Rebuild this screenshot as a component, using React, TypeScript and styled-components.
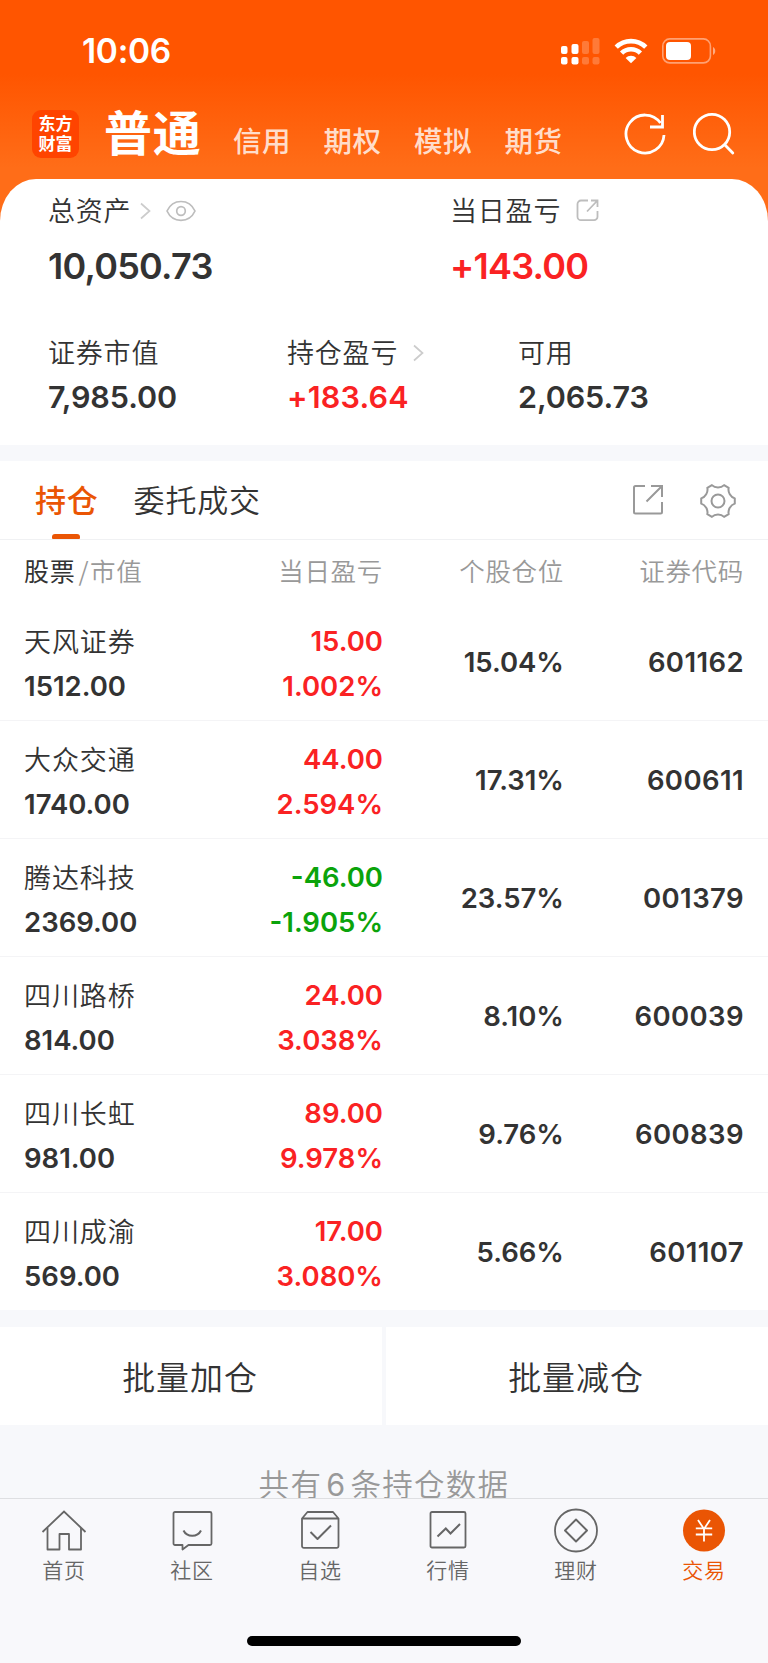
import React from "react";
import styled, { createGlobalStyle } from "styled-components";

const CJK = `"Noto Sans CJK SC", "Noto Sans", sans-serif`;
const NUM = `Inter, "Noto Sans CJK SC", sans-serif`;

const INK = "#333333";
const RED = "#fa2223";
const GREEN = "#0ba30b";
const ORANGE = "#ea5504";
const MUTED = "#999999";
const CANVAS = "#f7f8fb";

const GlobalStyle = createGlobalStyle`
  * { box-sizing: border-box; }
  body { margin: 0; background: ${CANVAS}; }
  svg { display: block; flex: none; }
`;

const Screen = styled.div`
  width: 768px;
  height: 1663px;
  overflow: hidden;
  display: flex;
  flex-direction: column;
  background: ${CANVAS};
  color: ${INK};
  font-family: ${CJK};
`;

const Hero = styled.header`
  height: 225px;
  flex: none;
  margin-bottom: -46px;
  background: linear-gradient(#ff5500 0, #ff5500 74px, #ff6d18 168px, #ff6d18 100%);
`;

const StatusBar = styled.div`
  height: 102px;
  display: flex;
  justify-content: space-between;
  padding: 0 52px 0 82px;
  color: #fff;
`;

const Clock = styled.time`
  font: 600 33.5px/103px ${NUM};
  letter-spacing: -0.3px;
`;

const StatusIcons = styled.div`
  display: flex;
  align-items: flex-start;
  padding-top: 37px;
  gap: 14px;
`;

const Nav = styled.nav`
  height: 77px;
  display: flex;
  align-items: flex-start;
  padding: 8px 33px 0 32px;
  color: #fff;
`;

const Logo = styled.div`
  width: 47px;
  height: 48px;
  border-radius: 9px;
  background: #ff4400;
  padding-top: 3px;
  text-align: center;
  font: 700 17px/20px ${CJK};
`;

const ActiveMarket = styled.div`
  margin: -13px 0 0 25px;
  width: 98px;
  font-size: 48px;
  line-height: 67px;
  font-weight: 700;
  letter-spacing: 0.8px;
  white-space: nowrap;
`;

const Markets = styled.div`
  display: flex;
  margin: 9px 0 0 31px;
  gap: 32px;
  flex: 1;
`;

const Market = styled.span`
  width: 58.5px;
  font-size: 28.5px;
  line-height: 41px;
  font-weight: 500;
  letter-spacing: 0.6px;
  white-space: nowrap;
  color: rgba(255, 255, 255, 0.8);
`;

const NavIcons = styled.div`
  display: flex;
  gap: 27px;
  padding-top: 2px;
`;

const Summary = styled.section`
  height: 266px;
  flex: none;
  background: #fff;
  border-radius: 36px 36px 0 0 / 42px 42px 0 0;
  padding: 12px 0 0 48px;
`;

const SummaryRow = styled.div<{ $columns: string; $top?: number }>`
  display: grid;
  grid-template-columns: ${(p) => p.$columns};
  margin-top: ${(p) => p.$top ?? 0}px;
`;

const Label = styled.div`
  height: 36px;
  display: flex;
  align-items: center;
  font-size: 27px;
  line-height: 36px;
  letter-spacing: 0.8px;
  font-weight: 350;
  white-space: nowrap;
  padding-top: 2px;
`;

const LabelIcon = styled.span<{ $gap: number }>`
  margin: 1px 0 0 ${(p) => p.$gap}px;
`;

const BigValue = styled.div<{ $color?: string }>`
  margin-top: 19px;
  font: 600 36px/40px ${NUM};
  letter-spacing: -0.75px;
  color: ${(p) => p.$color ?? INK};
`;

const Value = styled.div<{ $color?: string; $spacing?: number }>`
  margin-top: 10px;
  font: 600 30.5px/36px ${NUM};
  letter-spacing: ${(p) => p.$spacing ?? -0.1}px;
  color: ${(p) => p.$color ?? INK};
`;

const Panel = styled.section`
  flex: none;
  margin-top: 16px;
  background: #fff;
`;

const TabRow = styled.div`
  height: 79px;
  display: flex;
  padding: 0 32px 0 35px;
  border-bottom: 1px solid #f0f1f3;
`;

const Tab = styled.div<{ $active?: boolean }>`
  position: relative;
  margin-right: 35px;
  font-size: 31px;
  line-height: 75px;
  letter-spacing: 0.8px;
  font-weight: ${(p) => (p.$active ? 500 : 350)};
  color: ${(p) => (p.$active ? ORANGE : INK)};
  &::after {
    content: "";
    display: ${(p) => (p.$active ? "block" : "none")};
    position: absolute;
    left: 17px;
    bottom: 0;
    width: 28px;
    height: 5px;
    border-radius: 3px 3px 1px 1px;
    background: ${ORANGE};
  }
`;

const TabTools = styled.div`
  margin-left: auto;
  padding-top: 22px;
  display: flex;
  gap: 36px;
`;

const columns = `
  display: grid;
  grid-template-columns: 160px 199px 180px 180px;
  padding: 0 25px 0 24px;
`;

const TableHead = styled.div`
  ${columns}
  height: 62px;
  font-size: 25.5px;
  line-height: 60px;
  letter-spacing: 0.7px;
  font-weight: 350;
  color: ${MUTED};
  white-space: nowrap;
`;

const HeadCell = styled.span<{ $pull?: number }>`
  text-align: right;
  margin-right: ${(p) => -(p.$pull ?? 0)}px;
`;

const HeadStrong = styled.span`
  font-size: 25px;
  color: ${INK};
  font-weight: 400;
`;

const HeadSlash = styled.span`
  padding: 0 1px 0 3px;
`;

const Row = styled.div`
  ${columns}
  height: 118px;
  align-items: center;
  padding-top: 2px;
  & + & {
    border-top: 1px solid #f4f4f6;
    padding-top: 1px;
  }
`;

const Stack = styled.div`
  display: flex;
  flex-direction: column;
  gap: 7px;
  padding-top: 2px;
`;

const StockName = styled.div`
  height: 38px;
  font-size: 27px;
  line-height: 38px;
  letter-spacing: 0.9px;
  font-weight: 350;
  white-space: nowrap;
`;

const Figure = styled.div<{ $color?: string; $right?: boolean; $spacing?: number; $pull?: number }>`
  font: 600 27.5px/38px ${NUM};
  letter-spacing: ${(p) => p.$spacing ?? 0}px;
  text-align: ${(p) => (p.$right ? "right" : "left")};
  margin-right: ${(p) => -(p.$pull ?? 0)}px;
  color: ${(p) => p.$color ?? INK};
`;

const Actions = styled.div`
  flex: none;
  display: grid;
  grid-template-columns: 382px 382px;
  gap: 4px;
  margin-top: 17px;
`;

const Action = styled.button`
  height: 98px;
  border: 0;
  padding: 0 2px 0 0;
  background: #fff;
  color: ${INK};
  font: 350 33px/95px ${CJK};
  letter-spacing: 0.9px;
`;

const Note = styled.div`
  height: 73px;
  flex: none;
  overflow: hidden;
  padding-top: 36px;
  text-align: center;
  font-size: 30.5px;
  line-height: 44px;
  letter-spacing: 1.3px;
  font-weight: 350;
  color: ${MUTED};
`;

const NoteCount = styled.span`
  font-family: ${NUM};
  font-weight: 400;
  padding: 0 4px;
`;

const TabBar = styled.footer`
  flex: 1;
  background: #f8f8fb;
  border-top: 1px solid #dedfe2;
`;

const TabItems = styled.div`
  display: grid;
  grid-template-columns: repeat(6, 128px);
`;

const TabItem = styled.div<{ $active?: boolean }>`
  display: flex;
  flex-direction: column;
  align-items: center;
  padding-top: 9px;
  color: ${(p) => (p.$active ? ORANGE : "#666666")};
  font-size: 21px;
  line-height: 30px;
  letter-spacing: 0.7px;
  font-weight: 350;
`;

const HomeIndicator = styled.div`
  width: 274px;
  height: 10px;
  margin: 52px 0 0 247px;
  border-radius: 5px;
  background: #000;
`;

const CellularIcon = () => (
  <svg width="39" height="28" viewBox="0 0 39 28" fill="#fff">
    <rect x="0" y="9" width="6.5" height="8" rx="2" />
    <rect x="10.5" y="7" width="7" height="10" rx="2" />
    <rect x="21" y="4" width="7" height="13" rx="2" opacity=".22" />
    <rect x="31.5" y="1" width="7" height="16" rx="2" opacity=".22" />
    <rect x="0" y="20" width="6.5" height="7.5" rx="2" />
    <rect x="10.5" y="20" width="7" height="7.5" rx="2" />
    <rect x="21" y="20" width="7" height="7.5" rx="2" opacity=".22" />
    <rect x="31.5" y="20" width="7" height="7.5" rx="2" opacity=".22" />
  </svg>
);

const WifiIcon = () => (
  <svg width="34" height="27" viewBox="0 0 34 27">
    <g fill="none" stroke="#fff" strokeWidth="4.6">
      <path d="M2.2 10.2A21 21 0 0 1 31.8 10.2" />
      <path d="M7.6 16.2A13.2 13.2 0 0 1 26.4 16.2" />
    </g>
    <path d="M17 26.2L11.6 20.9A7.6 7.6 0 0 1 22.4 20.9Z" fill="#fff" />
  </svg>
);

const BatteryIcon = () => (
  <svg width="54" height="28" viewBox="0 0 54 28">
    <rect x="0.8" y="1.9" width="47.6" height="24" rx="7" fill="none" stroke="#fff" strokeOpacity=".45" strokeWidth="1.6" />
    <rect x="4" y="5" width="25" height="18" rx="4" fill="#fff" />
    <path d="M51 10v8c3-1.400 3-6.600 0-8z" fill="#fff" fillOpacity=".5" />
  </svg>
);

const RefreshIcon = () => (
  <svg width="42" height="44" viewBox="0 0 42 44" fill="none" stroke="#fff" strokeWidth="2.8">
    <path d="M40 23A19 19 0 1 1 36.500 11" />
    <path d="M38.500 3V15H26" />
  </svg>
);

const SearchIcon = () => (
  <svg width="42" height="44" viewBox="0 0 42 44" fill="none" stroke="#fff" strokeWidth="2.8" strokeLinecap="round">
    <circle cx="19" cy="20" r="17.700" />
    <path d="M32 33L39.800 41" />
  </svg>
);

const ChevronIcon = () => (
  <svg width="11" height="18" viewBox="0 0 11 18" fill="none" stroke="#cccccc" strokeWidth="1.7">
    <path d="M1 1.500L9.500 9L1 16.500" />
  </svg>
);

const EyeIcon = () => (
  <svg width="30" height="22" viewBox="0 0 30 22" fill="none" stroke="#bdbdbd" strokeWidth="1.7">
    <path d="M1 11C4 4.500 9.500 1.500 15 1.500S26 4.500 29 11C26 17.500 20.500 20.300 15 20.300S4 17.500 1 11Z" strokeLinejoin="round" />
    <circle cx="15" cy="11" r="4.300" />
  </svg>
);

const ShareSmallIcon = () => (
  <svg width="23" height="23" viewBox="0 0 23 23" fill="none" stroke="#bdbdbd" strokeWidth="1.8">
    <path d="M12 1.500H5A3.500 3.500 0 0 0 1.500 5V17.700A3.500 3.500 0 0 0 5 21.200H18A3.500 3.500 0 0 0 21.500 17.700V12" />
    <path d="M15 1.500H21.500V8M21 2L11 12.500" />
  </svg>
);

const ShareIcon = () => (
  <svg width="32" height="34" viewBox="0 0 32 34" fill="none" stroke={MUTED} strokeWidth="2">
    <path d="M13 3H3.500A1.500 1.500 0 0 0 2 4.500V29A1.500 1.500 0 0 0 3.500 30.500H28.500A1.500 1.500 0 0 0 30 29V19" />
    <path d="M19 3H30V14M29.500 3.500L14.500 18.500" />
  </svg>
);

const polar = (radius: number, degrees: number) => {
  const angle = (degrees * Math.PI) / 180;
  return `${(18 + radius * Math.cos(angle)).toFixed(2)} ${(18 + radius * Math.sin(angle)).toFixed(2)}`;
};

const gearPath =
  `M${polar(17, -9)}` +
  [0, 60, 120, 180, 240, 300]
    .map((a) => `L${polar(17, a + 9)}C${polar(13.2, a + 17)} ${polar(13.2, a + 43)} ${polar(17, a + 51)}`)
    .join("") +
  "Z";

const GearIcon = () => (
  <svg width="36" height="36" viewBox="0 0 36 36" fill="none" stroke={MUTED} strokeWidth="2" strokeLinejoin="round">
    <path d={gearPath} />
    <circle cx="18" cy="18" r="6.500" />
  </svg>
);

const tabIcon = { width: 46, height: 46, viewBox: "0 0 46 46", fill: "none", stroke: "currentColor", strokeWidth: 1.8 };

const HomeIcon = () => (
  <svg {...tabIcon}>
    <path d="M1.500 24L23 3.500L44.500 24" />
    <path d="M6.500 20V41.500H18.500V26H28V41.500H40V20" strokeLinejoin="round" />
  </svg>
);

const CommunityIcon = () => (
  <svg {...tabIcon}>
    <path d="M6 4H41A1.500 1.500 0 0 1 42.500 5.500V35.500A1.500 1.500 0 0 1 41 37H19.500L13.500 41.500V37H6A1.500 1.500 0 0 1 4.500 35.500V5.500A1.500 1.500 0 0 1 6 4Z" strokeLinejoin="round" />
    <path d="M14.500 22.500C18 29.500 28.500 29.500 32 22.500" strokeWidth="2" />
  </svg>
);

const WatchIcon = () => (
  <svg {...tabIcon} strokeLinejoin="round">
    <path d="M5 10.500L10.500 4H36L41.500 10.500V38A1.800 1.800 0 0 1 39.700 39.800H6.800A1.800 1.800 0 0 1 5 38ZM5 10.500H41.500" />
    <path d="M13.500 24L20.500 31L34 17.500" strokeWidth="2" />
  </svg>
);

const MarketIcon = () => (
  <svg {...tabIcon}>
    <rect x="5.500" y="4" width="35" height="35.500" rx="1.500" />
    <path d="M12.500 28.500L20.800 20.500L25.500 25.500L35 16" strokeWidth="2" />
  </svg>
);

const WealthIcon = () => (
  <svg {...tabIcon}>
    <circle cx="23" cy="22.500" r="21" />
    <path d="M23 11.500L34 22.500L23 33.500L12 22.500Z" strokeLinejoin="round" strokeWidth="1.900" />
  </svg>
);

const TradeIcon = () => (
  <svg {...tabIcon}>
    <circle cx="23" cy="22.500" r="21" fill={ORANGE} stroke="none" />
    <path d="M17 12L23 21L29 12M23 21V33.500M14.800 20.300H31.200M14.800 26.500H31.200" stroke="#fff" strokeWidth="1.800" />
  </svg>
);

const holdings = [
  { name: "天风证券", value: "1512.00", profit: "15.00", rate: "1.002%", share: "15.04%", code: "601162" },
  { name: "大众交通", value: "1740.00", profit: "44.00", rate: "2.594%", share: "17.31%", code: "600611" },
  { name: "腾达科技", value: "2369.00", profit: "-46.00", rate: "-1.905%", share: "23.57%", code: "001379" },
  { name: "四川路桥", value: "814.00", profit: "24.00", rate: "3.038%", share: "8.10%", code: "600039" },
  { name: "四川长虹", value: "981.00", profit: "89.00", rate: "9.978%", share: "9.76%", code: "600839" },
  { name: "四川成渝", value: "569.00", profit: "17.00", rate: "3.080%", share: "5.66%", code: "601107" },
];

const tabs = [
  { label: "首页", Icon: HomeIcon },
  { label: "社区", Icon: CommunityIcon },
  { label: "自选", Icon: WatchIcon },
  { label: "行情", Icon: MarketIcon },
  { label: "理财", Icon: WealthIcon },
  { label: "交易", Icon: TradeIcon, active: true },
];

export default function App() {
  return (
    <Screen>
      <GlobalStyle />
      <Hero>
        <StatusBar>
          <Clock>10:06</Clock>
          <StatusIcons>
            <CellularIcon />
            <WifiIcon />
            <BatteryIcon />
          </StatusIcons>
        </StatusBar>
        <Nav>
          <Logo>
            东方
            <br />
            财富
          </Logo>
          <ActiveMarket>普通</ActiveMarket>
          <Markets>
            {["信用", "期权", "模拟", "期货"].map((m) => (
              <Market key={m}>{m}</Market>
            ))}
          </Markets>
          <NavIcons>
            <RefreshIcon />
            <SearchIcon />
          </NavIcons>
        </Nav>
      </Hero>

      <Summary>
        <SummaryRow $columns="402px 1fr">
          <div>
            <Label>
              总资产
              <LabelIcon $gap={9}><ChevronIcon /></LabelIcon>
              <LabelIcon $gap={15}><EyeIcon /></LabelIcon>
            </Label>
            <BigValue>10,050.73</BigValue>
          </div>
          <div>
            <Label>
              当日盈亏
              <LabelIcon $gap={15}><ShareSmallIcon /></LabelIcon>
            </Label>
            <BigValue $color={RED}>+143.00</BigValue>
          </div>
        </SummaryRow>
        <SummaryRow $columns="239px 231px 1fr" $top={47}>
          <div>
            <Label>证券市值</Label>
            <Value>7,985.00</Value>
          </div>
          <div>
            <Label>
              持仓盈亏
              <LabelIcon $gap={15}><ChevronIcon /></LabelIcon>
            </Label>
            <Value $color={RED} $spacing={0.2}>+183.64</Value>
          </div>
          <div>
            <Label>可用</Label>
            <Value>2,065.73</Value>
          </div>
        </SummaryRow>
      </Summary>

      <Panel>
        <TabRow>
          <Tab $active>持仓</Tab>
          <Tab>委托成交</Tab>
          <TabTools>
            <ShareIcon />
            <GearIcon />
          </TabTools>
        </TabRow>
        <TableHead>
          <span>
            <HeadStrong>股票</HeadStrong>
            <HeadSlash>/</HeadSlash>市值
          </span>
          <HeadCell>当日盈亏</HeadCell>
          <HeadCell $pull={1}>个股仓位</HeadCell>
          <HeadCell $pull={1}>证券代码</HeadCell>
        </TableHead>
        {holdings.map((h) => {
          const tone = h.profit.startsWith("-") ? GREEN : RED;
          return (
            <Row key={h.code}>
              <Stack>
                <StockName>{h.name}</StockName>
                <Figure>{h.value}</Figure>
              </Stack>
              <Stack>
                <Figure $right $color={tone}>{h.profit}</Figure>
                <Figure $right $color={tone}>{h.rate}</Figure>
              </Stack>
              <Figure $right $pull={1}>{h.share}</Figure>
              <Figure $right $pull={1} $spacing={0.4}>{h.code}</Figure>
            </Row>
          );
        })}
      </Panel>

      <Actions>
        <Action>批量加仓</Action>
        <Action>批量减仓</Action>
      </Actions>
      <Note>
        共有<NoteCount>6</NoteCount>条持仓数据
      </Note>

      <TabBar>
        <TabItems>
          {tabs.map(({ label, Icon, active }) => (
            <TabItem key={label} $active={active}>
              <Icon />
              <span>{label}</span>
            </TabItem>
          ))}
        </TabItems>
        <HomeIndicator />
      </TabBar>
    </Screen>
  );
}
